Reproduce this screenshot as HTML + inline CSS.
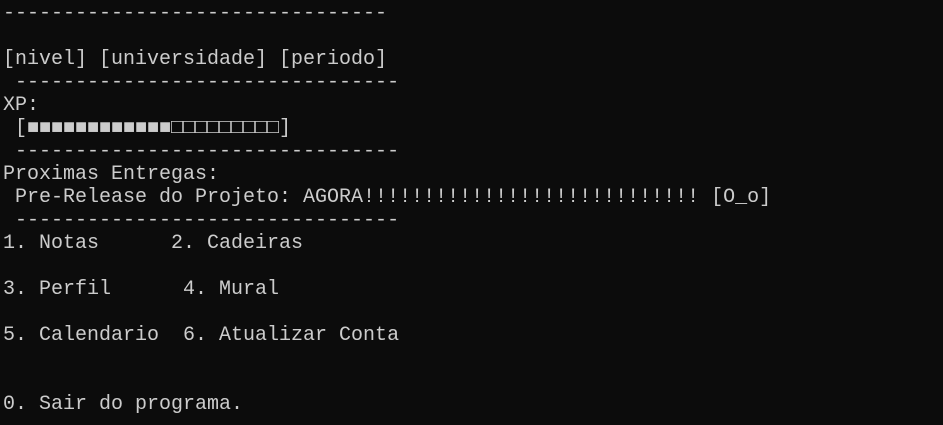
<!DOCTYPE html>
<html><head><meta charset="utf-8"><style>
html,body{margin:0;padding:0;background:#0c0c0c;width:943px;height:425px;overflow:hidden}
pre{margin:0;position:absolute;left:3px;top:2px;font-family:"Liberation Mono",monospace;font-size:20px;line-height:23px;color:#cccccc;white-space:pre}
</style></head><body><pre>--------------------------------

[nivel] [universidade] [periodo]
 --------------------------------
XP:
 [■■■■■■■■■■■■□□□□□□□□□]
 --------------------------------
Proximas Entregas:
 Pre-Release do Projeto: AGORA!!!!!!!!!!!!!!!!!!!!!!!!!!!! [O_o]
 --------------------------------
1. Notas      2. Cadeiras

3. Perfil      4. Mural

5. Calendario  6. Atualizar Conta


0. Sair do programa.</pre></body></html>
